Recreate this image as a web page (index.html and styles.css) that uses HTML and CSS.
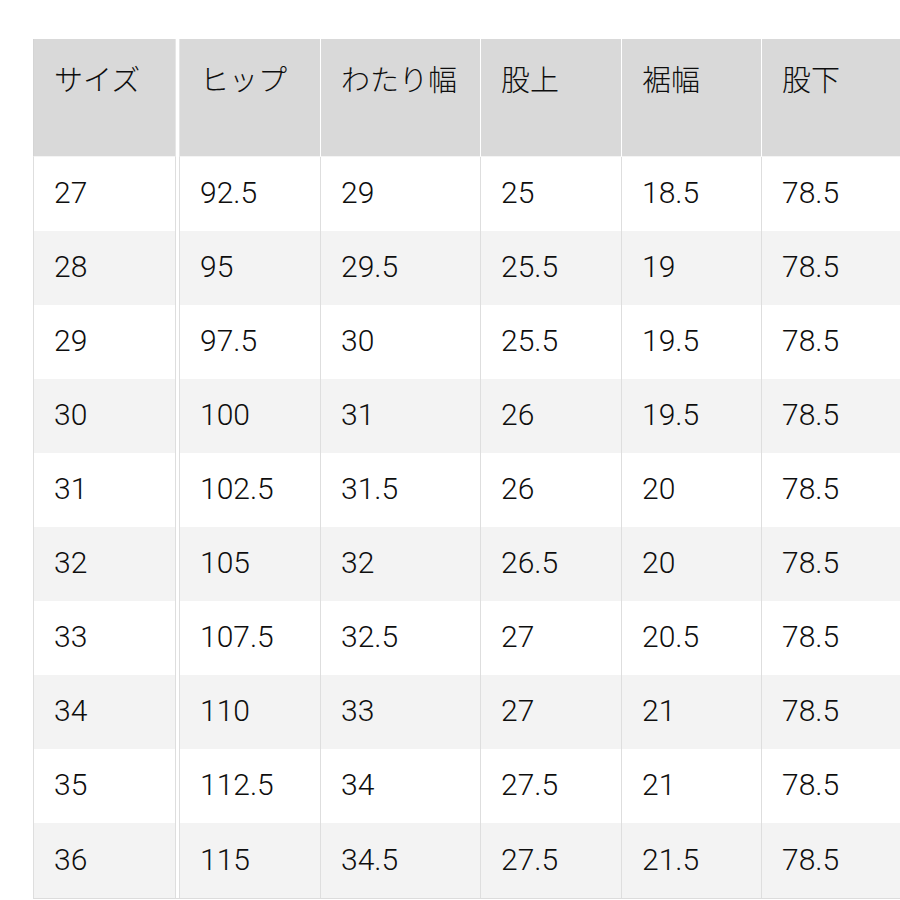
FILE: index.html
```html
<!DOCTYPE html>
<html lang="ja">
<head>
<meta charset="utf-8">
<title>サイズ表</title>
<link rel="stylesheet" href="styles.css">
</head>
<body>
<div class="size-table">
  <div class="row head">
    <div class="cell c1">サイズ</div><div class="sep"></div><div class="cell c2">ヒップ</div><div class="cell c3">わたり幅</div><div class="cell c4">股上</div><div class="cell c5">裾幅</div><div class="cell c6">股下</div>
  </div>
  <div class="row"><div class="cell c1">27</div><div class="sep"></div><div class="cell c2">92.5</div><div class="cell c3">29</div><div class="cell c4">25</div><div class="cell c5">18.5</div><div class="cell c6">78.5</div></div>
  <div class="row alt"><div class="cell c1">28</div><div class="sep"></div><div class="cell c2">95</div><div class="cell c3">29.5</div><div class="cell c4">25.5</div><div class="cell c5">19</div><div class="cell c6">78.5</div></div>
  <div class="row"><div class="cell c1">29</div><div class="sep"></div><div class="cell c2">97.5</div><div class="cell c3">30</div><div class="cell c4">25.5</div><div class="cell c5">19.5</div><div class="cell c6">78.5</div></div>
  <div class="row alt"><div class="cell c1">30</div><div class="sep"></div><div class="cell c2">100</div><div class="cell c3">31</div><div class="cell c4">26</div><div class="cell c5">19.5</div><div class="cell c6">78.5</div></div>
  <div class="row"><div class="cell c1">31</div><div class="sep"></div><div class="cell c2">102.5</div><div class="cell c3">31.5</div><div class="cell c4">26</div><div class="cell c5">20</div><div class="cell c6">78.5</div></div>
  <div class="row alt"><div class="cell c1">32</div><div class="sep"></div><div class="cell c2">105</div><div class="cell c3">32</div><div class="cell c4">26.5</div><div class="cell c5">20</div><div class="cell c6">78.5</div></div>
  <div class="row"><div class="cell c1">33</div><div class="sep"></div><div class="cell c2">107.5</div><div class="cell c3">32.5</div><div class="cell c4">27</div><div class="cell c5">20.5</div><div class="cell c6">78.5</div></div>
  <div class="row alt"><div class="cell c1">34</div><div class="sep"></div><div class="cell c2">110</div><div class="cell c3">33</div><div class="cell c4">27</div><div class="cell c5">21</div><div class="cell c6">78.5</div></div>
  <div class="row"><div class="cell c1">35</div><div class="sep"></div><div class="cell c2">112.5</div><div class="cell c3">34</div><div class="cell c4">27.5</div><div class="cell c5">21</div><div class="cell c6">78.5</div></div>
  <div class="row alt last"><div class="cell c1">36</div><div class="sep"></div><div class="cell c2">115</div><div class="cell c3">34.5</div><div class="cell c4">27.5</div><div class="cell c5">21.5</div><div class="cell c6">78.5</div></div>
</div>
</body>
</html>
```
FILE: styles.css
```css
html, body {
  margin: 0;
  padding: 0;
  background: #ffffff;
}
body {
  font-family: Roboto, "Liberation Sans", "Noto Sans CJK JP", sans-serif;
  color: #0e0e0e;
  overflow: hidden;
}
.size-table {
  margin-top: 39px;
  margin-left: 33px;
  width: 867px;
}
.row {
  display: flex;
  height: 74px;
  background: #ffffff;
}
.row.alt {
  background: #f3f3f3;
}
.row.last {
  height: 75px;
  border-bottom: 1px solid #dcdcdc;
}
.cell {
  box-sizing: border-box;
  border-left: 1px solid #dedede;
  padding-left: 20px;
  padding-bottom: 3px;
  font-size: 30px;
  font-weight: 300;
  display: flex;
  align-items: center;
  white-space: nowrap;
}
.sep {
  box-sizing: border-box;
  width: 5px;
  border-left: 1px solid #dedede;
  border-right: 1px solid #dedede;
  background: #ffffff;
}
.c1 { width: 142px; }
.c2 { width: 140px; border-left: none; }
.c3 { width: 160px; }
.c4 { width: 141px; }
.c5 { width: 140px; }
.c6 { width: 139px; }

.row.head {
  height: 118px;
  background: #ffffff;
}
.head .cell {
  background: #d9d9d9;
  border-left: 1px solid #ffffff;
  align-items: flex-start;
  padding-top: 19px;
  padding-bottom: 0;
  line-height: 40px;
  font-family: "Noto Sans CJK JP", sans-serif;
  font-size: 29px;
  font-weight: 300;
  color: #0e0e0e;
  border-bottom: 1px solid #f4f4f4;
}
.head .c1 { border-left: 1px solid #d4d4d4; }
.head .c2 { border-left: none; }
.head .sep {
  border-left: 1px solid #e6e6e6;
  border-right: 1px solid #e6e6e6;
}
```
